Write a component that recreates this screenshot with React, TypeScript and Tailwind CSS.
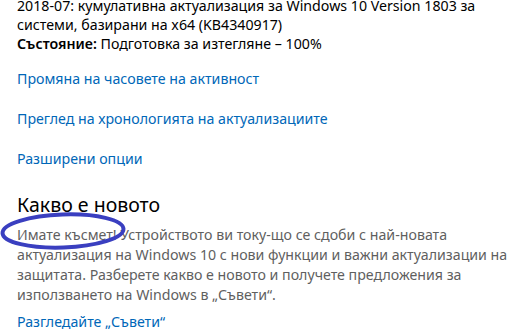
import React from "react";

const font = { fontFamily: '"Noto Sans", "Open Sans", sans-serif' };

function Circle() {
  return (
    <svg className="absolute left-0 top-[208px] pointer-events-none" width="132" height="46" viewBox="0 0 132 46">
      <ellipse cx="63" cy="23" rx="60.5" ry="16.5" fill="none" stroke="#3a3fc0" strokeWidth="4" transform="rotate(-2 63 23)" />
    </svg>
  );
}

export default function App() {
  return (
    <div className="relative w-[514px] h-[335px] overflow-hidden bg-white pl-[17px] text-[14.2px] whitespace-nowrap" style={font}>
      <div className="mt-[-4px] leading-[19px] text-black">
        <div>2018-07: кумулативна актуализация за Windows 10 Version 1803 за</div>
        <div>системи, базирани на x64 (KB4340917)</div>
        <div>
          <span className="font-semibold">Състояние:</span> Подготовка за изтегляне – 100%
        </div>
      </div>

      <div className="mt-[16px] flex flex-col items-start gap-[20px] leading-[20px] text-[#0067b8]">
        <a>Промяна на часовете на активност</a>
        <a>Преглед на хронологията на актуализациите</a>
        <a>Разширени опции</a>
      </div>

      <h2 className="mt-[22px] text-[19.5px] leading-[28px] text-black">Какво е новото</h2>

      <p className="mt-[6px] leading-[20px] text-[#5f5f5f]">
        Имате късмет! Устройството ви току-що се сдоби с най-новата
        <br />
        актуализация на Windows 10 с нови функции и важни актуализации на
        <br />
        защитата. Разберете какво е новото и получете предложения за
        <br />
        използването на Windows в „Съвети“.
      </p>

      <a className="block mt-[7px] leading-[20px] text-[#0067b8]">Разгледайте „Съвети“</a>

      <Circle />
    </div>
  );
}
